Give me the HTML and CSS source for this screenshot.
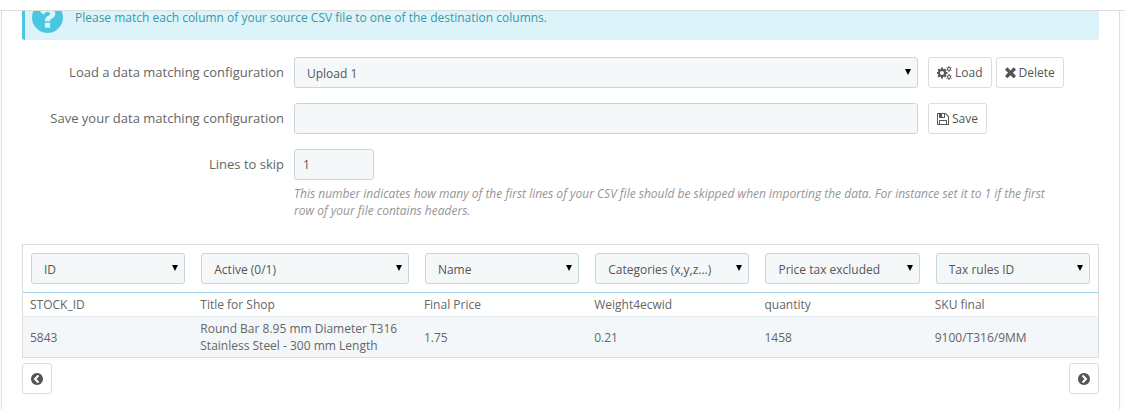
FILE: index.html
```html
<!DOCTYPE html>
<html lang="en">
<head>
    <meta charset="UTF-8">
    <meta name="viewport" content="width=device-width, initial-scale=1.0">
    <title>CSV Import</title>
    <link rel="stylesheet" href="styles.css">
</head>
<body>

<header class="topbar"></header>

<main class="panel">
    <div class="alert">
        <svg class="alert-icon" viewBox="128 128 1536 1536" aria-hidden="true"><path d="M1024 1376v-192q0-14-9-23t-23-9h-192q-14 0-23 9t-9 23v192q0 14 9 23t23 9h192q14 0 23-9t9-23zm256-672q0-88-55.5-163t-138.5-116-170-41q-243 0-371 213-15 24 8 42l132 100q7 6 19 6 16 0 25-12 53-68 86-92 34-24 86-24 48 0 85.5 26t37.5 59q0 38-20 61t-68 45q-63 28-115.5 86.5t-52.5 125.5v36q0 14 9 23t23 9h192q14 0 23-9t9-23q0-19 21.5-49.5t54.5-49.5q32-18 49-28.5t46-35 44.5-48 28-60.5 12.5-81zm384 192q0 209-103 385.5t-279.5 279.5-385.5 103-385.5-103-279.5-279.5-103-385.5 103-385.5 279.5-279.5 385.5-103 385.5 103 279.5 279.5 103 385.5z"/></svg>
        <span>Please match each column of your source CSV file to one of the destination columns.</span>
    </div>

    <form class="config">
        <!-- Load configuration -->
        <div class="form-row">
            <label for="loadConfig">Load a data matching configuration</label>
            <div class="select">
                <select id="loadConfig">
                    <option>Upload 1</option>
                </select>
            </div>
            <div class="actions">
                <button type="button" class="btn">
                    <svg class="icon icon-cogs" viewBox="0 0 15 14" aria-hidden="true">
                        <circle cx="5" cy="7" r="3" stroke-width="2"/>
                        <path stroke-width="2" d="M5 3.500V1.500M5 12.500V10.500M1.500 7H-.5M8.500 7H10.500M2.500 4.500L1.200 3.200M7.500 4.500L8.800 3.200M2.500 9.500L1.200 10.800M7.500 9.500L8.800 10.800"/>
                        <circle cx="12" cy="3" r="1.500"/>
                        <path d="M12 1.500V0M12 4.500V6M10.700 2.200L9.500 1.500M13.300 2.200L14.500 1.500M10.700 3.800L9.500 4.500M13.300 3.800L14.500 4.500"/>
                        <circle cx="12" cy="11" r="1.500"/>
                        <path d="M12 9.500V8M12 12.500V14M10.700 10.200L9.500 9.500M13.300 10.200L14.500 9.500M10.700 11.800L9.500 12.500M13.300 11.800L14.500 12.500"/>
                    </svg>
                    Load
                </button>
                <button type="button" class="btn">
                    <svg class="icon icon-times" viewBox="302 302 1188 1252" aria-hidden="true"><path d="M1490 1322q0 40-28 68l-136 136q-28 28-68 28t-68-28l-294-294-294 294q-28 28-68 28t-68-28l-136-136q-28-28-28-68t28-68l294-294-294-294q-28-28-28-68t28-68l136-136q28-28 68-28t68 28l294 294 294-294q28-28 68-28t68 28l136 136q28 28 28 68t-28 68l-294 294 294 294q28 28 28 68z"/></svg>
                    Delete
                </button>
            </div>
        </div>

        <!-- Save configuration -->
        <div class="form-row">
            <label for="saveConfig">Save your data matching configuration</label>
            <input type="text" id="saveConfig">
            <div class="actions">
                <button type="button" class="btn">
                    <svg class="icon" viewBox="128 128 1536 1536" aria-hidden="true"><path d="M512 1536h768v-384h-768v384zm896 0h128v-896q0-14-10-38.5t-20-34.5l-281-281q-10-10-34-20t-39-10v416q0 40-28 68t-68 28h-576q-40 0-68-28t-28-68v-416h-128v1280h128v-416q0-40 28-68t68-28h832q40 0 68 28t28 68v416zm-384-928v-320q0-13-9.5-22.5t-22.5-9.5h-192q-13 0-22.5 9.5t-9.5 22.5v320q0 13 9.5 22.5t22.5 9.5h192q13 0 22.5-9.5t9.5-22.5zm640 32v928q0 40-28 68t-68 28h-1344q-40 0-68-28t-28-68v-1344q0-40 28-68t68-28h928q40 0 88 20t76 48l280 280q28 28 48 76t20 88z"/></svg>
                    Save
                </button>
            </div>
        </div>

        <!-- Lines to skip -->
        <div class="form-row">
            <label for="skipLines">Lines to skip</label>
            <div class="skip">
                <input type="text" id="skipLines" class="short" value="1">
                <p class="help">This number indicates how many of the first lines of your CSV file should be skipped when importing the data. For instance set it to 1 if the first row of your file contains headers.</p>
            </div>
        </div>
    </form>

    <table class="matching">
        <colgroup>
            <col>
            <col class="col-wide">
            <col>
            <col>
            <col>
            <col>
        </colgroup>
        <thead>
            <tr>
                <th><div class="select"><select aria-label="Column 1"><option>ID</option></select></div></th>
                <th><div class="select"><select aria-label="Column 2"><option>Active (0/1)</option></select></div></th>
                <th><div class="select"><select aria-label="Column 3"><option>Name</option></select></div></th>
                <th><div class="select"><select aria-label="Column 4"><option>Categories (x,y,z...)</option></select></div></th>
                <th><div class="select"><select aria-label="Column 5"><option>Price tax excluded</option></select></div></th>
                <th><div class="select"><select aria-label="Column 6"><option>Tax rules ID</option></select></div></th>
            </tr>
        </thead>
        <tbody>
            <tr>
                <td>STOCK_ID</td>
                <td>Title for Shop</td>
                <td>Final Price</td>
                <td>Weight4ecwid</td>
                <td>quantity</td>
                <td>SKU final</td>
            </tr>
            <tr>
                <td>5843</td>
                <td>Round Bar 8.95 mm Diameter T316 Stainless Steel - 300 mm Length</td>
                <td>1.75</td>
                <td>0.21</td>
                <td>1458</td>
                <td>9100/T316/9MM</td>
            </tr>
        </tbody>
    </table>

    <div class="pager">
        <button type="button" class="btn" aria-label="Previous columns">
            <svg class="icon" viewBox="128 128 1536 1536" aria-hidden="true"><path d="M1037 1395l102-102q19-19 19-45t-19-45l-307-307 307-307q19-19 19-45t-19-45l-102-102q-19-19-45-19t-45 19l-454 454q-19 19-19 45t19 45l454 454q19 19 45 19t45-19zm627-499q0 209-103 385.5t-279.5 279.5-385.5 103-385.5-103-279.5-279.5-103-385.5 103-385.5 279.5-279.5 385.5-103 385.5 103 279.5 279.5 103 385.5z"/></svg>
        </button>
        <button type="button" class="btn" aria-label="Next columns">
            <svg class="icon" viewBox="128 128 1536 1536" aria-hidden="true"><path d="M845 1395l454-454q19-19 19-45t-19-45l-454-454q-19-19-45-19t-45 19l-102 102q-19 19-19 45t19 45l307 307-307 307q-19 19-19 45t19 45l102 102q19 19 45 19t45-19zm819-499q0 209-103 385.5t-279.5 279.5-385.5 103-385.5-103-279.5-279.5-103-385.5 103-385.5 279.5-279.5 385.5-103 385.5 103 279.5 279.5 103 385.5z"/></svg>
        </button>
    </div>
</main>

</body>
</html>
```

FILE: styles.css
```css
* {
    box-sizing: border-box;
}
body {
    display: flex;
    flex-direction: column;
    min-height: 100vh;
    margin: 0;
    font-family: "Open Sans", sans-serif;
    font-size: 12px;
    line-height: 17px;
    color: #666;
    background-color: #fcfdfe;
}
.topbar {
    height: 11px;
    background-color: white;
    border-bottom: 1px solid #ddd;
}
.panel {
    flex: 1;
    margin: 0 5px 0 1px;
    padding: 0 20px 14px;
    overflow: hidden;
    border: solid #d3e3ee;
    border-width: 0 1px;
    background-color: white;
}

/* Alert, scrolled partly under the top bar */
.alert {
    display: flex;
    align-items: center;
    gap: 12px;
    height: 46px;
    margin-top: -17px;
    padding: 0 7px;
    border-left: 3px solid #4ac7e0;
    border-radius: 3px;
    background-color: #dcf4f9;
    color: #3d97a8;
}
.alert-icon {
    width: 31px;
    height: 31px;
    fill: #4ac7e0;
}

/* Form */
.config {
    display: flex;
    flex-direction: column;
    gap: 15px;
    padding: 17px 0 25px;
}
.form-row {
    display: grid;
    grid-template-columns: 262fr 624fr 171fr;
    column-gap: 10px;
}
.form-row label {
    font-size: 13px;
    line-height: 31px;
    text-align: right;
}
input,
select {
    display: block;
    width: 100%;
    height: 31px;
    margin: 0;
    padding: 0 8px;
    border: 1px solid #c7d6db;
    border-radius: 3px;
    background-color: #f5f8f9;
    font: inherit;
    color: #555;
}
select {
    appearance: none;
    padding: 1px 12px 0;
}
.select {
    position: relative;
}
.select::after {
    content: "";
    position: absolute;
    top: 12px;
    right: 7px;
    border: 3px solid transparent;
    border-top: 6px solid black;
    border-bottom: 0;
    pointer-events: none;
}
.short {
    width: 80px;
}
.skip {
    grid-column: 2 / 4;
}
.help {
    margin: 5px 0 0;
    padding-right: 44px;
    font-style: italic;
    color: #959595;
}

/* Buttons */
.actions {
    display: flex;
    gap: 4px;
}
.btn {
    display: flex;
    align-items: center;
    gap: 3px;
    height: 31px;
    padding: 0 8px;
    border: 1px solid #ddd;
    border-radius: 3px;
    background-color: white;
    font: inherit;
    color: #555;
    cursor: pointer;
}
.icon {
    width: 12px;
    height: 12px;
    fill: #555;
}
.icon-cogs {
    width: 15px;
    height: 14px;
    fill: none;
    stroke: #555;
}
.icon-times {
    width: 11px;
    height: 11px;
}

/* Column matching */
.matching {
    width: 100%;
    table-layout: fixed;
    border: 1px solid #ddd;
    border-spacing: 0;
}
.col-wide {
    width: 20.8%;
}
.matching th {
    padding: 8px;
    border-bottom: 1px solid #a0d0eb;
    font-weight: normal;
    text-align: left;
}
.matching td {
    padding: 3px 7px;
}
.matching tbody tr:last-child td {
    border-top: 1px solid #e3eaee;
    background-color: #f3f7fa;
}
.pager {
    display: flex;
    justify-content: space-between;
    padding-top: 5px;
}
```
